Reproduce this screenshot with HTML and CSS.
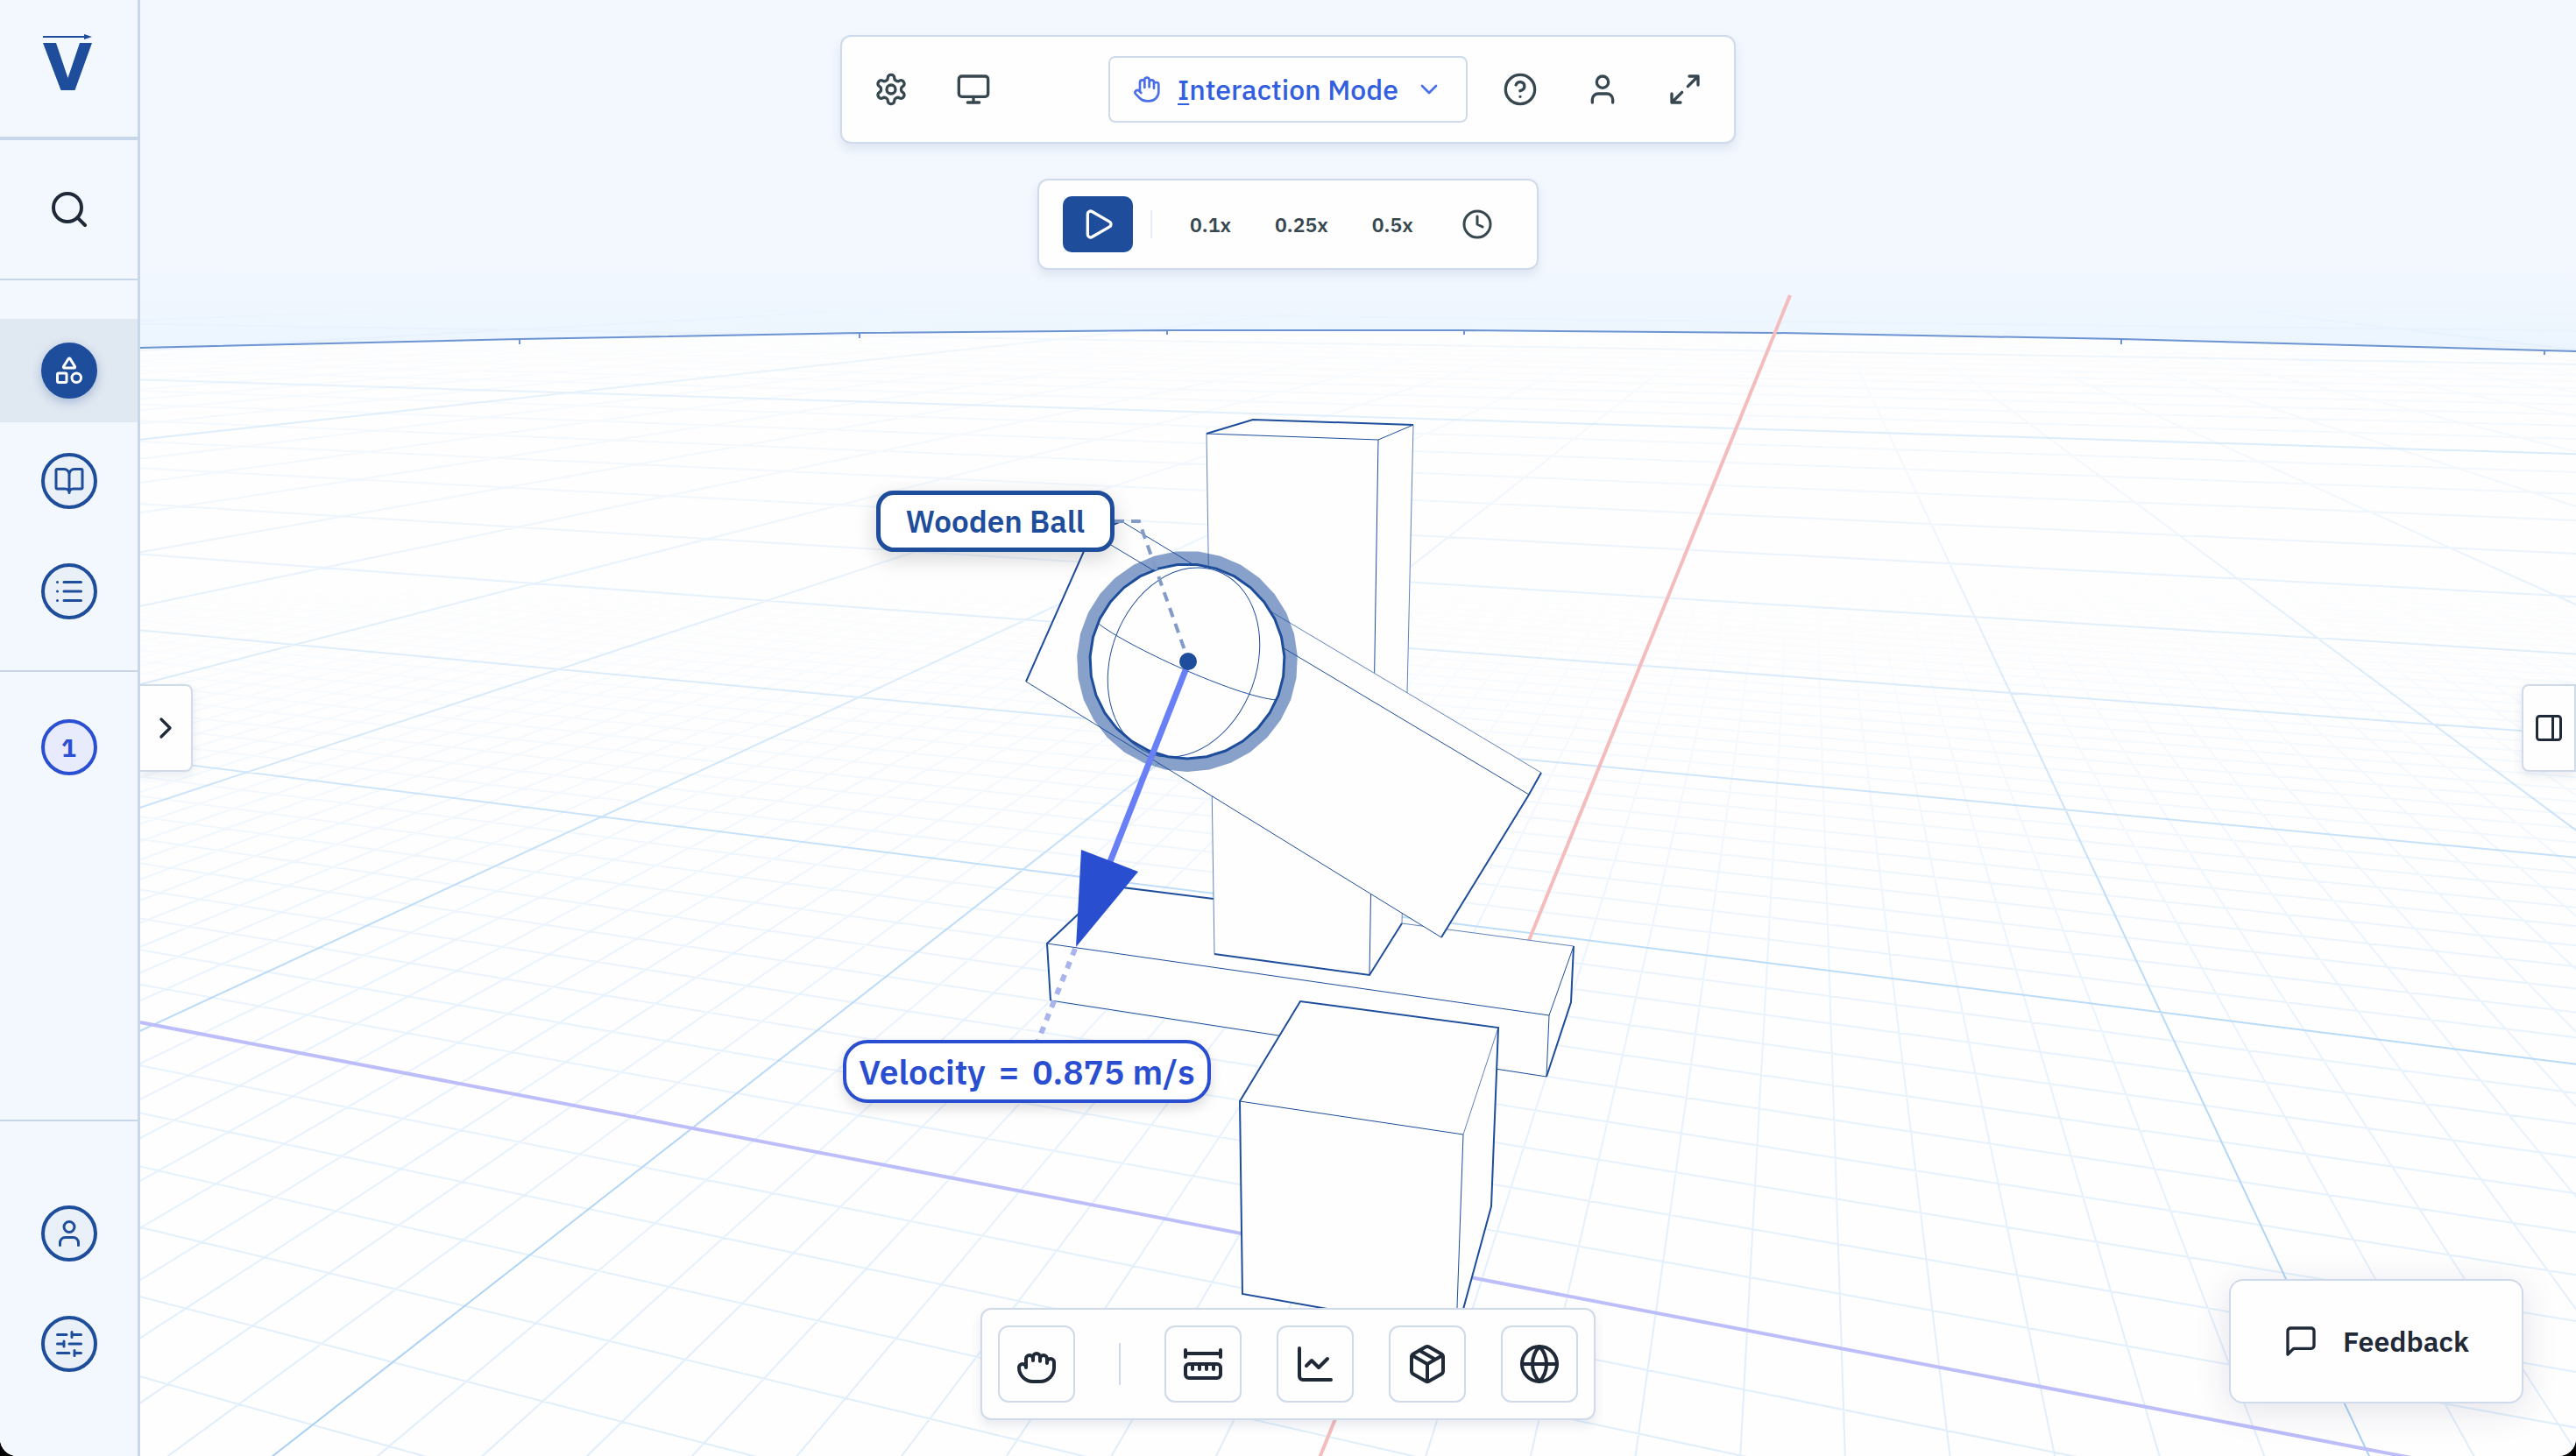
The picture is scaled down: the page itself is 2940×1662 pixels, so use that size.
FILE: index.html
```html
<!DOCTYPE html>
<html lang="en">
<head>
<meta charset="utf-8">
<meta name="viewport" content="width=device-width, initial-scale=1">
<title>Physics Lab</title>
<link rel="stylesheet" href="styles.css">
</head>
<body>
<div class="app">
  <main class="stage">
    <svg class="scene" viewBox="0 0 2940 1662" preserveAspectRatio="xMidYMid slice" aria-hidden="true">
      <defs>
        <linearGradient id="sky" gradientUnits="userSpaceOnUse" x1="0" y1="300" x2="0" y2="400">
          <stop offset="0" stop-color="#f3f8ff"/><stop offset="1" stop-color="#ecf5fe"/>
        </linearGradient>
        <linearGradient id="minor" gradientUnits="userSpaceOnUse" x1="0" y1="640" x2="0" y2="1662">
          <stop offset="0" stop-color="#dfeefd" stop-opacity="0"/>
          <stop offset=".2" stop-color="#dfeefd" stop-opacity=".3"/>
          <stop offset=".45" stop-color="#dfeefd" stop-opacity=".65"/>
          <stop offset="1" stop-color="#dcecfb" stop-opacity=".9"/>
        </linearGradient>
        <linearGradient id="unit" gradientUnits="userSpaceOnUse" x1="0" y1="370" x2="0" y2="1662">
          <stop offset="0" stop-color="#cfe5fb" stop-opacity="0"/>
          <stop offset=".06" stop-color="#cfe5fb" stop-opacity=".15"/>
          <stop offset=".15" stop-color="#cfe5fb" stop-opacity=".28"/>
          <stop offset=".3" stop-color="#c8e1f9" stop-opacity=".6"/>
          <stop offset=".5" stop-color="#b8daf8" stop-opacity=".9"/>
          <stop offset="1" stop-color="#a8cff4"/>
        </linearGradient>
        <linearGradient id="ten" gradientUnits="userSpaceOnUse" x1="0" y1="345" x2="0" y2="520">
          <stop offset="0" stop-color="#cfe6fb" stop-opacity="0"/>
          <stop offset=".3" stop-color="#cfe6fb" stop-opacity=".3"/>
          <stop offset="1" stop-color="#cfe6fb" stop-opacity=".8"/>
        </linearGradient>
      </defs>
      <rect width="2940" height="1662" fill="url(#sky)"/>
      <path fill="#fefefe" d="M0 402L160 397 593 387 981 380 1332 377 1671 377 2025 380 2421 387 2904 400 2940 401V1662H0Z"/>
      <path id="grid-minor" fill="none" stroke="url(#minor)" stroke-width="2"/>
      <path id="grid-unit" fill="none" stroke="url(#unit)" stroke-width="2"/>
      <path id="grid-ten" fill="none" stroke="url(#ten)" stroke-width="2"/>
      <path class="horizon" d="M0 402L160 397 593 387 981 380 1332 377 1671 377 2025 380 2421 387 2904 400 2940 401M593 387v6M981 380v6M1332 377v5M1671 377v5M2025 380v5M2421 387v6M2904 400v5"/>
      <path class="axis-z" d="M160 1167L2752 1664"/>
      <path class="axis-x" d="M2043 337L1506 1664"/>

      <g class="solid">
        <path class="face" d="M1195 1077L1265 1011 1796 1080 1793 1144 1765 1229 1199 1142Z"/>
        <path class="pale" d="M1600 1054L1796 1080"/>
        <path class="thick" d="M1199 1142L1195 1077 1265 1011 1385 1026M1796 1080L1793 1144 1765 1229"/>
        <path d="M1195 1077L1768 1159 1765 1229 1199 1142M1768 1159L1796 1080"/>
        <path class="face" d="M1377 495L1430 479 1613 485 1600 1054 1563 1113 1386 1089Z"/>
        <path class="pale" d="M1377 495L1386 1089M1613 485L1600 1054"/>
        <path d="M1377 495L1573 502 1613 485M1573 502L1563 1113"/>
        <path class="thick" d="M1377 495L1430 479 1613 485"/>
        <path class="thick" d="M1386 1089L1563 1113 1600 1054"/>
        <path class="face" d="M1171 778L1246 609 1280 595 1759 882 1745 907 1645 1070Z"/>
        <path d="M1246 609L1745 907"/>
        <path class="pale" d="M1452 699L1759 882"/>
        <path d="M1645 1070L1171 778M1280 595L1452 699"/>
        <path class="thick" d="M1171 778L1246 609 1280 595"/>
        <path class="thick" d="M1759 882L1745 907 1645 1070"/>
        <path class="face" d="M1415 1257L1484 1143 1710 1173 1702 1377 1663 1520 1418 1477Z"/>
        <path d="M1415 1257L1670 1295M1670 1295L1662 1520"/>
        <path class="pale" d="M1670 1295L1710 1173"/>
        <path class="thick" d="M1415 1257L1484 1143 1710 1173 1702 1377 1663 1520 1418 1477Z"/>
      </g>

      <g class="ball">
        <path id="ball-halo" class="halo" fill-rule="evenodd"/>
        <path id="ball-body" class="body"/>
        <ellipse cx="1351" cy="756" rx="83" ry="111" transform="rotate(20 1351 756)"/>
        <path d="M1254 712C1285 737 1410 795 1457 799"/>
      </g>
      <path class="leader" d="M1272 595H1300L1352 742"/>
      <path class="velocity-shaft" d="M1355 760L1266 986"/>
      <circle cx="1356" cy="755" r="10" fill="#1e4d9b"/>
      <path class="velocity-head" d="M1234 970L1299 995 1228 1081Z"/>
      <path class="velocity-leader" d="M1227 1083L1184 1190"/>
    </svg>

    <div class="tag tag-object">Wooden Ball</div>
    <div class="tag tag-velocity"><span>Velocity</span><span>=</span><span>0.875 m/s</span></div>

    <div class="top-bars">
      <div class="panel toolbar" role="toolbar" aria-label="Workspace">
        <div class="tool-group">
          <button class="icon-btn" aria-label="Settings"><svg class="icon i40" viewBox="0 0 24 24"><path d="M12.22 2h-.44a2 2 0 0 0-2 2v.18a2 2 0 0 1-1 1.73l-.43.25a2 2 0 0 1-2 0l-.15-.08a2 2 0 0 0-2.73.73l-.22.38a2 2 0 0 0 .73 2.73l.15.1a2 2 0 0 1 1 1.72v.51a2 2 0 0 1-1 1.74l-.15.09a2 2 0 0 0-.73 2.73l.22.38a2 2 0 0 0 2.73.73l.15-.08a2 2 0 0 1 2 0l.43.25a2 2 0 0 1 1 1.73V20a2 2 0 0 0 2 2h.44a2 2 0 0 0 2-2v-.18a2 2 0 0 1 1-1.73l.43-.25a2 2 0 0 1 2 0l.15.08a2 2 0 0 0 2.73-.73l.22-.39a2 2 0 0 0-.73-2.73l-.15-.08a2 2 0 0 1-1-1.74v-.5a2 2 0 0 1 1-1.74l.15-.09a2 2 0 0 0 .73-2.73l-.22-.38a2 2 0 0 0-2.73-.73l-.15.08a2 2 0 0 1-2 0l-.43-.25a2 2 0 0 1-1-1.73V4a2 2 0 0 0-2-2z"/><circle cx="12" cy="12" r="3"/></svg></button>
          <button class="icon-btn" aria-label="Display"><svg class="icon i40" viewBox="0 0 24 24"><rect x="2" y="3" width="20" height="14" rx="2"/><path d="M8 21h8M12 17v4"/></svg></button>
        </div>
        <button class="mode-btn" aria-haspopup="menu">
          <svg class="icon i32" viewBox="0 0 24 24"><path d="M18 11V6a2 2 0 0 0-2-2a2 2 0 0 0-2 2M14 10V4a2 2 0 0 0-2-2a2 2 0 0 0-2 2v2M10 10.500V6a2 2 0 0 0-2-2a2 2 0 0 0-2 2v8M18 8a2 2 0 1 1 4 0v6a8 8 0 0 1-8 8h-2c-2.800 0-4.500-.86-5.990-2.340l-3.600-3.600a2 2 0 0 1 2.830-2.820L7 15"/></svg>
          <span class="mode-label"><span class="hotkey">I</span>nteraction Mode</span>
          <svg class="icon i32" viewBox="0 0 24 24"><path d="m6 9 6 6 6-6"/></svg>
        </button>
        <div class="tool-group">
          <button class="icon-btn" aria-label="Help"><svg class="icon i40" viewBox="0 0 24 24"><circle cx="12" cy="12" r="10"/><path d="M9.090 9a3 3 0 0 1 5.830 1c0 2-3 3-3 3M12 17h.01"/></svg></button>
          <button class="icon-btn" aria-label="Account"><svg class="icon i40" viewBox="0 0 24 24"><path d="M19 21v-2a4 4 0 0 0-4-4H9a4 4 0 0 0-4 4v2"/><circle cx="12" cy="7" r="4"/></svg></button>
          <button class="icon-btn" aria-label="Full screen"><svg class="icon i40" viewBox="0 0 24 24"><path d="M15 3h6v6M21 3l-7 7M3 21l7-7M9 21H3v-6"/></svg></button>
        </div>
      </div>
      <div class="panel playback" role="toolbar" aria-label="Playback">
        <button class="play-btn" aria-label="Play"><svg class="icon i40" viewBox="0 0 24 24"><path d="M5 5a2 2 0 0 1 3.008-1.728l11.997 6.998a2 2 0 0 1 .003 3.458l-12 7A2 2 0 0 1 5 19z"/></svg></button>
        <span class="play-rule"></span>
        <button class="speed-btn">0.1x</button>
        <button class="speed-btn">0.25x</button>
        <button class="speed-btn">0.5x</button>
        <button class="clock-btn" aria-label="Time"><svg class="icon i36" viewBox="0 0 24 24"><circle cx="12" cy="12" r="10"/><path d="M12 6v6l4 2"/></svg></button>
      </div>
    </div>

    <button class="side-tab tab-left" aria-label="Open panel"><svg class="icon i40" viewBox="0 0 24 24"><path d="m9 18 6-6-6-6"/></svg></button>
    <button class="side-tab tab-right" aria-label="Open inspector"><svg class="icon i36" viewBox="0 0 24 24"><rect x="3" y="3" width="18" height="18" rx="2"/><path d="M15 3v18"/></svg></button>

    <div class="panel dock" role="toolbar" aria-label="Tools">
      <button class="dock-btn" aria-label="Grab"><svg class="icon i48" viewBox="0 0 24 24"><path d="M18 11.500V9a2 2 0 0 0-2-2a2 2 0 0 0-2 2v1.400M14 10V8a2 2 0 0 0-2-2a2 2 0 0 0-2 2v2M10 9.900V9a2 2 0 0 0-2-2a2 2 0 0 0-2 2v5M6 14a2 2 0 0 0-2-2a2 2 0 0 0-2 2M18 11a2 2 0 1 1 4 0v3a8 8 0 0 1-8 8h-4a8 8 0 0 1-8-8 2 2 0 1 1 4 0"/></svg></button>
      <span class="dock-rule"></span>
      <button class="dock-btn" aria-label="Measure"><svg class="icon i48" viewBox="0 0 24 24"><path d="M10 15v-3M14 15v-3M18 15v-3M6 15v-3M2 8V4M22 6H2M22 8V4"/><rect x="2" y="12" width="20" height="8" rx="2"/></svg></button>
      <button class="dock-btn" aria-label="Graph"><svg class="icon i48" viewBox="0 0 24 24"><path d="M3 3v16a2 2 0 0 0 2 2h16M19 9l-5 5-4-4-3 3"/></svg></button>
      <button class="dock-btn" aria-label="Objects"><svg class="icon i48" viewBox="0 0 24 24"><path d="M16.500 9.400l-9-5.190M21 16V8a2 2 0 0 0-1-1.730l-7-4a2 2 0 0 0-2 0l-7 4A2 2 0 0 0 3 8v8a2 2 0 0 0 1 1.730l7 4a2 2 0 0 0 2 0l7-4A2 2 0 0 0 21 16zM3.270 6.960L12 12.010l8.730-5.050M12 22.080V12"/></svg></button>
      <button class="dock-btn" aria-label="World"><svg class="icon i48" viewBox="0 0 24 24"><circle cx="12" cy="12" r="10"/><path d="M12 2a14.500 14.500 0 0 0 0 20 14.500 14.500 0 0 0 0-20M2 12h20"/></svg></button>
    </div>

    <button class="panel feedback"><svg class="icon i40" viewBox="0 0 24 24"><path d="M21 15a2 2 0 0 1-2 2H7l-4 4V5a2 2 0 0 1 2-2h14a2 2 0 0 1 2 2z"/></svg>Feedback</button>
  </main>

  <nav class="sidebar" aria-label="Main">
    <a class="brand" href="#" aria-label="Home"><svg class="logo" viewBox="0 0 56 64"><path d="M0 1H47V-1L56 2 47 5V3H0zM0 9h15l13.500 40L42 9h14L36.500 63h-16z"/></svg></a>
    <button class="search-btn" aria-label="Search"><svg class="icon i48" viewBox="0 0 24 24"><circle cx="11" cy="11" r="8"/><path d="m21 21-4.300-4.300"/></svg></button>
    <div class="nav-group">
      <button class="nav-row is-active" aria-label="Shapes"><span class="disc"><svg class="icon i36" viewBox="0 0 24 24"><path d="M8.300 10a.7.7 0 0 1-.626-1.079L11.400 3a.7.7 0 0 1 1.198-.043L16.300 8.900a.7.7 0 0 1-.572 1.100Z"/><rect x="3" y="14" width="7" height="7" rx="1"/><circle cx="17.500" cy="17.500" r="3.500"/></svg></span></button>
      <button class="nav-row" aria-label="Library"><span class="disc"><svg class="icon i36" viewBox="0 0 24 24"><path d="M12 7v14M3 18a1 1 0 0 1-1-1V4a1 1 0 0 1 1-1h5a4 4 0 0 1 4 4 4 4 0 0 1 4-4h5a1 1 0 0 1 1 1v13a1 1 0 0 1-1 1h-6a3 3 0 0 0-3 3 3 3 0 0 0-3-3z"/></svg></span></button>
      <button class="nav-row" aria-label="Outline"><span class="disc"><svg class="icon i36" viewBox="0 0 24 24"><path d="M3 5h.01M3 12h.01M3 19h.01M8 5h13M8 12h13M8 19h13"/></svg></span></button>
    </div>
    <div class="pages">
      <button class="disc disc-page">1</button>
    </div>
    <div class="nav-foot">
      <button class="disc" aria-label="Profile"><svg class="icon i36" viewBox="0 0 24 24"><path d="M19 21v-2a4 4 0 0 0-4-4H9a4 4 0 0 0-4 4v2"/><circle cx="12" cy="7" r="4"/></svg></button>
      <button class="disc" aria-label="Preferences"><svg class="icon i36" viewBox="0 0 24 24"><path d="M10 5H3M12 19H3M14 3v4M16 17v4M21 12h-9M21 19h-5M21 5h-7M8 10v4M8 12H3"/></svg></button>
    </div>
  </nav>
</div>
<script src="scene.js"></script>
</body>
</html>
```
FILE: styles.css
```css
* { box-sizing: border-box; }

:root {
  --navy: #1e4d9b;
  --royal: #2b4fd3;
  --ink: #1f2937;
  --slate: #37474f;
  --line: #cfdaeb;
  --pale: #f3f8ff;
}

body {
  margin: 0;
  background: #000;
  font-family: "IBM Plex Sans", Roboto, "Liberation Sans", sans-serif;
  color: var(--ink);
}

button {
  margin: 0;
  padding: 0;
  border: 0;
  background: none;
  font: inherit;
  color: inherit;
  cursor: pointer;
}

.app {
  display: grid;
  grid-template-columns: 160px 1fr;
  min-height: 100vh;
  border-radius: 0 0 20px 20px;
  overflow: hidden;
}

.icon {
  display: block;
  flex: none;
  fill: none;
  stroke: currentColor;
  stroke-width: 2;
  stroke-linecap: round;
  stroke-linejoin: round;
}
.i32 { width: 32px; height: 32px; }
.i36 { width: 36px; height: 36px; }
.i40 { width: 40px; height: 40px; }
.i48 { width: 48px; height: 48px; }

/* Sidebar */
.sidebar {
  grid-area: 1 / 1;
  position: relative;
  display: flex;
  flex-direction: column;
  background: var(--pale);
  border-right: 3px solid #c8d6ea;
}
.brand {
  display: flex;
  justify-content: center;
  height: 160px;
  padding: 40px 4px 0 0;
  border-bottom: 4px solid #c8d6ea;
}
.logo { width: 56px; height: 64px; fill: var(--navy); overflow: visible; }
.search-btn {
  display: grid;
  place-items: center;
  height: 160px;
  border-bottom: 2px solid #c8d6ea;
}
.nav-group {
  padding: 44px 0 31px;
  border-bottom: 2px solid #c8d6ea;
}
.nav-row {
  display: grid;
  place-items: center;
  width: 100%;
  height: 118px;
  margin-bottom: 8px;
}
.nav-row:last-child { margin-bottom: 0; }
.is-active { background: #e0e8f1; }
.disc {
  display: grid;
  place-items: center;
  width: 64px;
  height: 64px;
  border: 4px solid var(--navy);
  border-radius: 50%;
  background: #eaf0f7;
  color: var(--navy);
}
.is-active .disc {
  background: var(--navy);
  color: #fff;
  box-shadow: 0 4px 12px rgba(30, 77, 155, .3);
}
.pages {
  flex: 1;
  display: flex;
  flex-direction: column;
  align-items: center;
  padding-top: 54px;
}
.disc-page {
  border-color: var(--royal);
  background: #e8ebfb;
  color: var(--royal);
  font-size: 28px;
  font-weight: 700;
}
.nav-foot {
  display: flex;
  flex-direction: column;
  align-items: center;
  gap: 62px;
  padding: 96px 0;
  border-top: 2px solid #c8d6ea;
}

/* Stage */
.stage {
  grid-area: 1 / 1 / 2 / 3;
  position: relative;
  display: grid;
  overflow: hidden;
}
.stage > * { grid-area: 1 / 1; }
.scene {
  position: absolute;
  inset: 0;
  width: 100%;
  height: 100%;
}

.panel {
  position: relative;
  display: flex;
  align-items: center;
  background: #fefefe;
  border: 2px solid var(--line);
  border-radius: 12px;
  box-shadow: 0 6px 12px rgba(40, 60, 110, .1);
}

.top-bars {
  place-self: start center;
  display: flex;
  flex-direction: column;
  align-items: center;
  gap: 40px;
  padding-top: 40px;
}
.toolbar {
  justify-content: space-between;
  width: 1022px;
  height: 124px;
  padding: 0 36px;
  color: var(--slate);
}
.tool-group { display: flex; gap: 54px; }
.toolbar .tool-group:first-child { width: 228px; }
.mode-btn {
  display: flex;
  align-items: center;
  justify-content: space-between;
  width: 410px;
  height: 76px;
  padding: 0 26px;
  border: 2px solid var(--line);
  border-radius: 8px;
  color: #4a6fe8;
  font-size: 32px;
  font-weight: 500;
}
.mode-label { color: #325fe0; }
.hotkey {
  text-decoration: underline;
  text-decoration-thickness: 2px;
  text-underline-offset: 4px;
}

.playback {
  width: 572px;
  height: 104px;
  padding-left: 27px;
  color: var(--slate);
}
.play-btn {
  display: grid;
  place-items: center;
  width: 80px;
  height: 64px;
  margin-right: 20px;
  border-radius: 10px;
  background: var(--navy);
  color: #fff;
}
.play-rule {
  width: 2px;
  height: 32px;
  margin-right: 18px;
  background: #e6ecf5;
}
.speed-btn {
  padding: 0 25px;
  font-size: 23px;
  font-weight: 600;
}
.clock-btn { margin-left: 30px; }

.side-tab {
  position: relative;
  display: grid;
  place-items: center;
  height: 100px;
  background: #fefefe;
  border: 2px solid var(--line);
  box-shadow: 0 4px 12px rgba(40, 60, 110, .1);
}
.tab-left {
  place-self: center start;
  width: 62px;
  margin-left: 158px;
  border-radius: 0 8px 8px 0;
}
.tab-right {
  place-self: center end;
  width: 62px;
  border-radius: 8px 0 0 8px;
}

.dock {
  place-self: end center;
  gap: 40px;
  height: 128px;
  margin-bottom: 41px;
  padding: 0 18px;
}
.dock-btn {
  display: grid;
  place-items: center;
  width: 88px;
  height: 88px;
  border: 2px solid var(--line);
  border-radius: 12px;
}
.dock-rule {
  width: 2px;
  height: 48px;
  margin: 0 10px;
  background: var(--line);
}

.feedback {
  place-self: end;
  gap: 28px;
  height: 142px;
  margin: 0 60px 60px 0;
  padding: 0 60px;
  border-radius: 16px;
  box-shadow: 0 8px 40px rgba(40, 30, 90, .12);
  font-size: 32px;
  font-weight: 600;
}

/* Tags pinned to points of the scene */
.tag {
  position: absolute;
  display: flex;
  align-items: center;
  justify-content: center;
  background: #fff;
  white-space: nowrap;
  font-weight: 600;
}
.tag-object {
  left: calc(50% - 470px);
  top: calc(50% - 271px);
  width: 272px;
  height: 70px;
  border: 5px solid var(--navy);
  border-radius: 20px;
  box-shadow: 0 8px 24px rgba(0, 0, 0, .16);
  color: var(--navy);
  font-size: 35px;
}
.tag-velocity {
  left: calc(50% - 508px);
  top: calc(50% + 356px);
  gap: 15px;
  width: 420px;
  height: 72px;
  border: 4px solid #2a4ed0;
  border-radius: 28px;
  box-shadow: 0 6px 14px rgba(0, 0, 0, .14);
  color: #2a4ed0;
  font-size: 39px;
}

/* Scene drawing */
.horizon { fill: none; stroke: #6d94d2; stroke-width: 2; }
.axis-x { stroke: #f4bcbc; stroke-width: 4; }
.axis-z { stroke: #bdbdfa; stroke-width: 4; }
.solid { fill: none; stroke: #1e4d9b; stroke-width: 1; }
.solid .face { fill: #fefefe; stroke: none; }
.solid .pale { stroke: #5f83be; }
.solid .thick { stroke: #1e4d9b; stroke-width: 2; }
.ball { fill: none; stroke: #1e4d9b; stroke-width: 1; }
.ball .halo { fill: rgba(30, 77, 155, .53); stroke: none; }
.ball .body { fill: #fefefe; stroke: #1e4d9b; stroke-width: 3; }
.leader { fill: none; stroke: #839bc9; stroke-width: 4; stroke-dasharray: 11 8; }
.velocity-shaft { stroke: #687ff6; stroke-width: 7; }
.velocity-head { fill: #2a4ed0; }
.velocity-leader { stroke: #aab4ec; stroke-width: 6; stroke-dasharray: 8 8; }
```
FILE: scene.js
```js
// Ground plane seen in perspective. Every line runs to one of two vanishing
// points on a level horizon; u is the distance below that horizon.
const HORIZON = 294;
const BOTTOM = 1680 - HORIZON;
const LEFT_VP = -4402;
const RIGHT_VP = 2061;

function acrossLine(n) {
  const k = 5.222 + 2.751 * n;
  const x0 = 150, x1 = 2950;
  return `M${x0} ${HORIZON + (x0 - LEFT_VP) / k}L${x1} ${HORIZON + (x1 - LEFT_VP) / k}`;
}

function depthLine(m, start) {
  const k = 0.4045 - 0.8745 * m;
  return `M${RIGHT_VP - k * start} ${HORIZON + start}L${RIGHT_VP - k * BOTTOM} ${HORIZON + BOTTOM}`;
}

const minor = [], unit = [], ten = [];
for (let i = -12; i <= 70; i++) {
  if (i % 10) minor.push(acrossLine(i / 10));
}
for (let i = -70; i <= 40; i++) {
  if (i % 10) minor.push(depthLine(i / 10, 300));
}
for (let n = 1; n <= 50; n++) {
  (n % 10 ? unit : ten).push(acrossLine(n));
}
for (let m = -60; m <= 30; m++) {
  if (m === 0) continue;
  (m % 10 ? unit : ten).push(depthLine(m, m % 10 ? 90 : 55));
}
document.getElementById("grid-minor").setAttribute("d", minor.join(""));
document.getElementById("grid-unit").setAttribute("d", unit.join(""));
document.getElementById("grid-ten").setAttribute("d", ten.join(""));

// The ball is a faceted disc with a corner at the bottom.
function disc(cx, cy, r) {
  const sides = 31;
  const points = [];
  for (let i = 0; i < sides; i++) {
    const a = Math.PI / 2 + i * 2 * Math.PI / sides;
    points.push(`${(cx + r * Math.cos(a)).toFixed(1)} ${(cy + r * Math.sin(a)).toFixed(1)}`);
  }
  return `M${points.join("L")}Z`;
}
document.getElementById("ball-halo").setAttribute("d", disc(1355, 755, 126) + disc(1355, 755, 111));
document.getElementById("ball-body").setAttribute("d", disc(1355, 755, 111));
```
